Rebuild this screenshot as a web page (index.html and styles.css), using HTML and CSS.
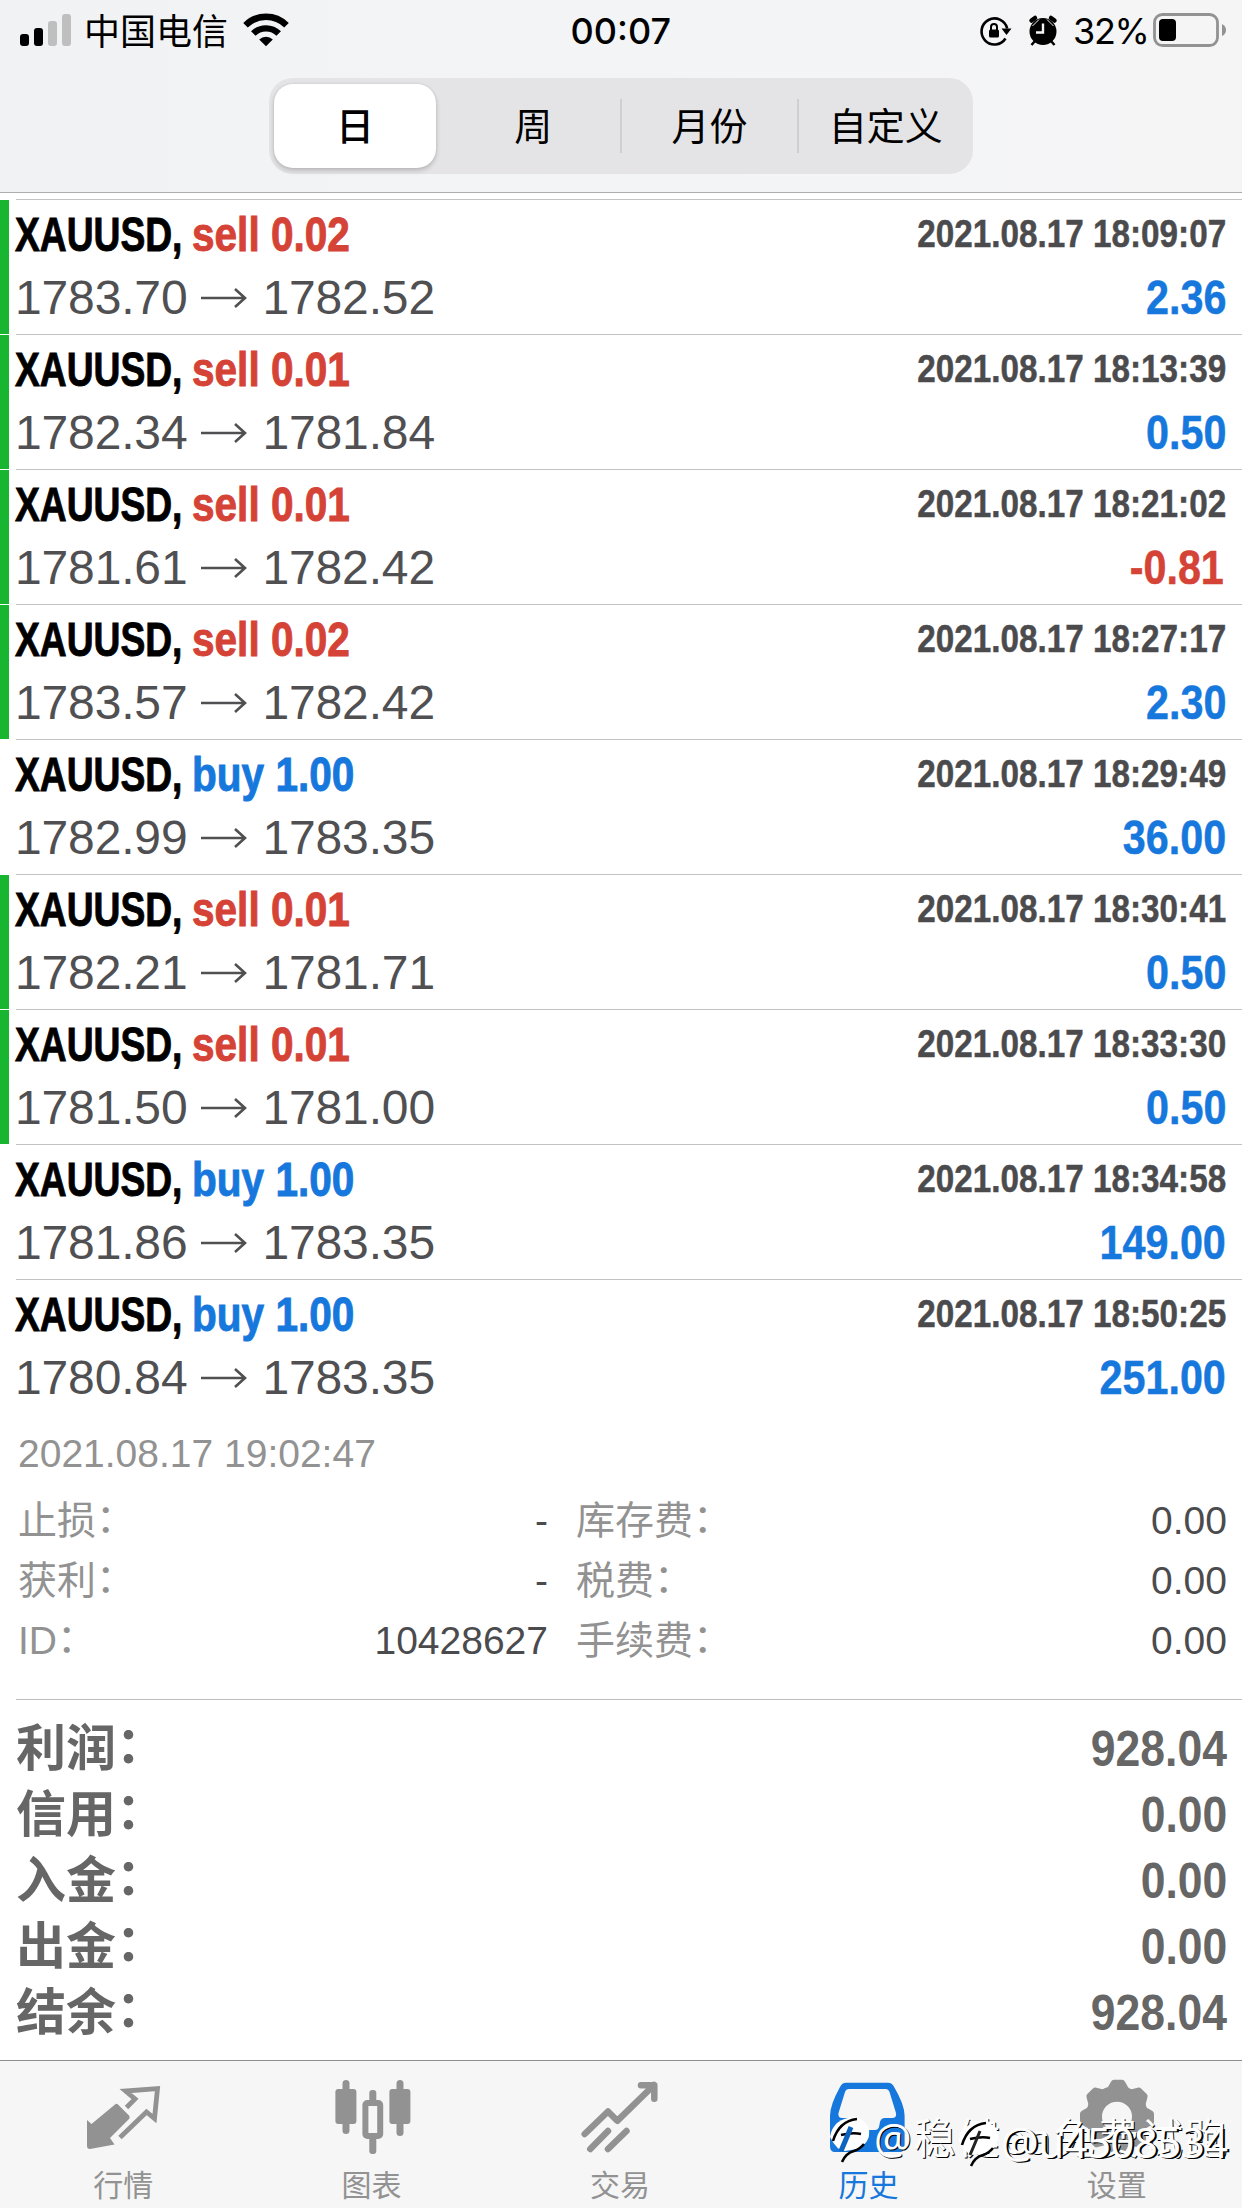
FILE: index.html
```html
<!DOCTYPE html>
<html lang="zh-CN">
<head>
<meta charset="utf-8">
<title>历史</title>
<link rel="stylesheet" href="styles.css">
</head>
<body>
<header class="header">
  <div class="status">
    <div class="status-left">
      <svg class="signal" width="52" height="34" viewBox="0 0 52 34"><rect x="0" y="21" width="9" height="12" rx="3"/><rect x="14" y="15" width="9" height="18" rx="3"/><g fill="#bfbfbf"><rect x="28" y="8" width="9" height="25" rx="3"/><rect x="42" y="1" width="9" height="32" rx="3"/></g></svg>
      <span class="carrier">中国电信</span>
      <svg class="wifi" width="46" height="34" viewBox="0 0 46 34"><g fill="none" stroke="#000" stroke-width="6.4"><path d="M2.5 12.3a29 29 0 0 1 41 0"/><path d="M10.3 20.6a18 18 0 0 1 25.400 0"/></g><path d="M16.200 26.400a9.800 9.800 0 0 1 13.600 0L23 33.200z"/></svg>
    </div>
    <time class="clock">00:07</time>
    <div class="status-right">
      <svg class="lock" width="34" height="34" viewBox="0 0 34 34"><path d="M26.500 24.500a13 13 0 1 1 1.700-10" fill="none" stroke="#000" stroke-width="2.600"/><path d="M22.500 14.500h10l-5 6.500z"/><rect x="10" y="15.500" width="10" height="8" rx="1.500"/><path d="M12 16v-3a3 3 0 0 1 6 0v3" fill="none" stroke="#000" stroke-width="2"/></svg>
      <svg class="alarm" width="30" height="34" viewBox="0 0 30 34"><circle cx="15" cy="17.500" r="13.500"/><path d="M3.500 6.500L7 4M26.500 6.500L23 4" stroke="#000" stroke-width="4.500" stroke-linecap="round"/><path d="M4.500 12L11 5.500M25.500 12L19 5.500" stroke="#f5f5f5" stroke-width="1"/><path d="M7 27l-3.500 4M23 27l3.500 4" stroke="#000" stroke-width="2.500"/><path d="M15 9.500v9H8" fill="none" stroke="#f5f5f5" stroke-width="2.400"/></svg>
      <span class="percent">32%</span>
      <svg class="battery" width="74" height="36" viewBox="0 0 74 36"><rect x="1.500" y="2.500" width="63" height="31" rx="8" fill="none" stroke="#929292" stroke-width="2.800"/><rect x="6" y="7" width="17" height="22" rx="4"/><path d="M69 12q4 2 4 6t-4 6z" fill="#929292"/></svg>
    </div>
  </div>
  <nav class="segments">
    <span class="segment selected">日</span>
    <span class="segment">周</span>
    <span class="segment divided">月份</span>
    <span class="segment divided">自定义</span>
  </nav>
</header>

<main class="content">
  <ul class="deals">
    <li class="deal marked"><div class="deal-body"><div class="line"><span class="title"><b class="symbol">XAUUSD,</b><b class="sell">sell 0.02</b></span><time class="date">2021.08.17 18:09:07</time></div><div class="line"><span class="price">1783.70<svg class="arrow" viewBox="0 0 46 22"><path d="M0 11h44M34 2l10 9-10 9"/></svg>1782.52</span><b class="profit">2.36</b></div></div></li>
    <li class="deal marked"><div class="deal-body"><div class="line"><span class="title"><b class="symbol">XAUUSD,</b><b class="sell">sell 0.01</b></span><time class="date">2021.08.17 18:13:39</time></div><div class="line"><span class="price">1782.34<svg class="arrow" viewBox="0 0 46 22"><path d="M0 11h44M34 2l10 9-10 9"/></svg>1781.84</span><b class="profit">0.50</b></div></div></li>
    <li class="deal marked"><div class="deal-body"><div class="line"><span class="title"><b class="symbol">XAUUSD,</b><b class="sell">sell 0.01</b></span><time class="date">2021.08.17 18:21:02</time></div><div class="line"><span class="price">1781.61<svg class="arrow" viewBox="0 0 46 22"><path d="M0 11h44M34 2l10 9-10 9"/></svg>1782.42</span><b class="profit loss">-0.81</b></div></div></li>
    <li class="deal marked"><div class="deal-body"><div class="line"><span class="title"><b class="symbol">XAUUSD,</b><b class="sell">sell 0.02</b></span><time class="date">2021.08.17 18:27:17</time></div><div class="line"><span class="price">1783.57<svg class="arrow" viewBox="0 0 46 22"><path d="M0 11h44M34 2l10 9-10 9"/></svg>1782.42</span><b class="profit">2.30</b></div></div></li>
    <li class="deal"><div class="deal-body"><div class="line"><span class="title"><b class="symbol">XAUUSD,</b><b class="buy">buy 1.00</b></span><time class="date">2021.08.17 18:29:49</time></div><div class="line"><span class="price">1782.99<svg class="arrow" viewBox="0 0 46 22"><path d="M0 11h44M34 2l10 9-10 9"/></svg>1783.35</span><b class="profit">36.00</b></div></div></li>
    <li class="deal marked"><div class="deal-body"><div class="line"><span class="title"><b class="symbol">XAUUSD,</b><b class="sell">sell 0.01</b></span><time class="date">2021.08.17 18:30:41</time></div><div class="line"><span class="price">1782.21<svg class="arrow" viewBox="0 0 46 22"><path d="M0 11h44M34 2l10 9-10 9"/></svg>1781.71</span><b class="profit">0.50</b></div></div></li>
    <li class="deal marked"><div class="deal-body"><div class="line"><span class="title"><b class="symbol">XAUUSD,</b><b class="sell">sell 0.01</b></span><time class="date">2021.08.17 18:33:30</time></div><div class="line"><span class="price">1781.50<svg class="arrow" viewBox="0 0 46 22"><path d="M0 11h44M34 2l10 9-10 9"/></svg>1781.00</span><b class="profit">0.50</b></div></div></li>
    <li class="deal"><div class="deal-body"><div class="line"><span class="title"><b class="symbol">XAUUSD,</b><b class="buy">buy 1.00</b></span><time class="date">2021.08.17 18:34:58</time></div><div class="line"><span class="price">1781.86<svg class="arrow" viewBox="0 0 46 22"><path d="M0 11h44M34 2l10 9-10 9"/></svg>1783.35</span><b class="profit">149.00</b></div></div></li>
    <li class="deal"><div class="deal-body"><div class="line"><span class="title"><b class="symbol">XAUUSD,</b><b class="buy">buy 1.00</b></span><time class="date">2021.08.17 18:50:25</time></div><div class="line"><span class="price">1780.84<svg class="arrow" viewBox="0 0 46 22"><path d="M0 11h44M34 2l10 9-10 9"/></svg>1783.35</span><b class="profit">251.00</b></div></div></li>
  </ul>

  <section class="details">
    <time class="closed">2021.08.17 19:02:47</time>
    <dl class="fields">
      <div class="field"><dt>止损<i>：</i></dt><dd>-</dd></div>
      <div class="field"><dt>库存费<i>：</i></dt><dd>0.00</dd></div>
      <div class="field"><dt>获利<i>：</i></dt><dd>-</dd></div>
      <div class="field"><dt>税费<i>：</i></dt><dd>0.00</dd></div>
      <div class="field"><dt>ID<i>：</i></dt><dd>10428627</dd></div>
      <div class="field"><dt>手续费<i>：</i></dt><dd>0.00</dd></div>
    </dl>
  </section>

  <dl class="summary">
    <div class="total"><dt>利润<i>：</i></dt><dd>928.04</dd></div>
    <div class="total"><dt>信用<i>：</i></dt><dd>0.00</dd></div>
    <div class="total"><dt>入金<i>：</i></dt><dd>0.00</dd></div>
    <div class="total"><dt>出金<i>：</i></dt><dd>0.00</dd></div>
    <div class="total"><dt>结余<i>：</i></dt><dd>928.04</dd></div>
  </dl>
</main>

<footer class="tabs">
  <a class="tab"><svg class="icon" viewBox="0 0 80 80"><path d="M3 45l4.500 4L31 29.500q1.500-1.500 3 0l11 11q1.500 2 0 3.500L26 63l4.500 6.500L6 74q-3 0-3-3z"/><path d="M42.500 32.500l8.500-8.500-9.500-8 32-2.500-3 30-8-6.500-26.500 25.500" fill="none" stroke="currentColor" stroke-width="4.800"/></svg><span>行情</span></a>
  <a class="tab"><svg class="icon" viewBox="0 0 80 80"><rect x="2.400" y="14" width="21" height="35" rx="3"/><rect x="9.500" y="5" width="7" height="54" rx="3.500"/><rect x="56.400" y="14" width="21" height="35" rx="3"/><rect x="63.500" y="5" width="7" height="56" rx="3.500"/><rect x="36.300" y="15" width="7" height="14" rx="3"/><rect x="36.300" y="60" width="7" height="19" rx="3"/><rect x="32.400" y="28" width="14.800" height="33" rx="2" fill="none" stroke="currentColor" stroke-width="6"/></svg><span>图表</span></a>
  <a class="tab"><svg class="icon" viewBox="0 0 80 80"><g fill="none" stroke="currentColor" stroke-width="6.500" stroke-linecap="round"><path d="M3.700 59L27 36.500l9.300 9.300L73 10M60 10.300h13.300v13.500" stroke-linejoin="round"/><path d="M9.300 74L27 56M27 74l18.500-18"/></g></svg><span>交易</span></a>
  <a class="tab active"><svg class="icon" viewBox="0 0 80 80"><path fill-rule="evenodd" d="M17 7.700h42q4 0 6 4 10.600 18 10.600 29V71q0 6-5 6H6q-5 0-5-6V41q0-11 10-29 2-4.300 6-4.300zM20 14q-3 0-4 3L9.500 38q-1 5 4 5H21q4 0 5 4l1 5q1 3 4 3h15q3 0 4-3l1-5q1-4 5-4h7q5 0 4-5L60.500 17q-1-3-4-3z"/></svg><span>历史</span></a>
  <a class="tab"><svg class="icon" viewBox="0 0 80 80"><g transform="translate(39 41.700)"><circle r="23" fill="none" stroke="currentColor" stroke-width="16"/><path d="M-10-28l4-7q1-2 3-2h8q2 0 3 2l4 7zM-10 28l4 7q1 2 3 2h8q2 0 3-2l4-7z"/><path d="M-10-28l4-7q1-2 3-2h8q2 0 3 2l4 7zM-10 28l4 7q1 2 3 2h8q2 0 3-2l4-7z" transform="rotate(45)"/><path d="M-10-28l4-7q1-2 3-2h8q2 0 3 2l4 7zM-10 28l4 7q1 2 3 2h8q2 0 3-2l4-7z" transform="rotate(90)"/><path d="M-10-28l4-7q1-2 3-2h8q2 0 3 2l4 7zM-10 28l4 7q1 2 3 2h8q2 0 3-2l4-7z" transform="rotate(135)"/></g></svg><span>设置</span></a>
  <div class="watermark first"><svg class="brand" viewBox="0 0 42 52"><path d="M1 24Q4 5 26 4q10 2 14 12 2 14-12 20l-12 2q-8 0-15-14z" fill="#fff"/><path d="M4 28Q10 8 28 6M12 22q12-3 20-1M13 49q4-9 12-11 6-2 10-7" fill="none" stroke="#000" stroke-width="2.600"/><path d="M12 38q6-14 10-24" fill="none" stroke="#0d63c0" stroke-width="5"/></svg><span>@稳健ea免费试跑</span></div>
  <div class="watermark second"><svg class="brand" viewBox="0 0 42 52"><path d="M1 24Q4 5 26 4q10 2 14 12 2 14-12 20l-12 2q-8 0-15-14z" fill="#fff"/><path d="M4 28Q10 8 28 6M12 22q12-3 20-1M13 49q4-9 12-11 6-2 10-7" fill="none" stroke="#000" stroke-width="2.600"/><path d="M12 38q6-14 10-24" fill="none" stroke="#222" stroke-width="3"/></svg><span>@u4508534</span></div>
</footer>
</body>
</html>
```
FILE: styles.css
```css
* { box-sizing: border-box; }
body, ul, dl, dd { margin: 0; padding: 0; }
body {
  width: 1242px;
  height: 2208px;
  overflow: hidden;
  display: flex;
  flex-direction: column;
  background: #fff;
  font-family: "Liberation Sans", "Noto Sans CJK SC", sans-serif;
}

/* Header */
.header {
  height: 193px;
  background: linear-gradient(90deg, #f1f2f3, #f3f4f6 40%, #f5f5f6);
  border-bottom: 1px solid #adadad;
  display: flex;
  flex-direction: column;
  align-items: center;
}
.status {
  width: 100%;
  height: 78px;
  display: grid;
  grid-template-columns: 1fr auto 1fr;
  padding: 0 15px 0 20px;
  line-height: 62px;
  font-size: 36px;
}
.status-left, .status-right { display: flex; height: 62px; align-items: center; }
.status-right { justify-content: flex-end; }
.signal { margin-right: 12px; margin-top: -2px; }
.carrier { width: 144px; margin-right: 15px; padding-top: 3px; }
.wifi { margin-top: -2px; }
.clock { font-family: Inter, sans-serif; font-weight: 500; width: 106px; }
.lock { margin-right: 15px; }
.alarm { margin-right: 15px; margin-top: -1px; }
.percent { font-family: Inter, sans-serif; width: 75px; letter-spacing: -1.3px; margin-right: 5px; }
.battery { margin-top: -2px; }

.segments {
  width: 704px;
  height: 96px;
  display: flex;
  align-items: center;
  border-radius: 24px;
  background: #e4e4e6;
  font-size: 38px;
}
.segment { flex: 1; text-align: center; height: 54px; line-height: 56px; }
.divided { border-left: 2px solid #cfcfd1; }
.selected {
  flex: 0 0 162px;
  margin: 0 10px 0 5px;
  height: 84px;
  line-height: 86px;
  border-radius: 19px;
  background: #fff;
  font-weight: 500;
  box-shadow: 0 3px 5px rgba(0, 0, 0, .16), 0 0 3px rgba(0, 0, 0, .12);
}

/* Deals */
.content { flex: 1; padding-top: 6px; }
.deals { list-style: none; }
.deal { height: 135px; display: flex; padding-left: 16px; }
.marked { padding-left: 0; }
.marked::before { content: ""; width: 9px; margin: 1px 7px 0 0; background: #17b530; }
.deal-body { flex: 1; border-top: 1px solid #c3c3c3; padding: 3px 16px 0 0; }
.line { height: 63px; line-height: 63px; display: flex; justify-content: space-between; font-size: 48px; }
.title { display: flex; margin-left: -1px; }
.symbol, .sell, .buy { transform-origin: left; white-space: nowrap; -webkit-text-stroke: .9px currentColor; }
.symbol { width: 177px; transform: scaleX(.775); }
.sell, .buy { transform: scaleX(.845); }
.sell { color: #d54236; }
.buy, .profit { color: #1677dc; }
.date { font-size: 39px; font-weight: 700; color: #4b4b4e; line-height: 61px; transform: scaleX(.853); transform-origin: right; white-space: nowrap; -webkit-text-stroke: .5px currentColor; }
.price { color: #505053; display: flex; align-items: center; margin-left: -1px; letter-spacing: -.15px; }
.arrow { width: 46px; height: 22px; margin: 0 15px 0 14px; fill: none; stroke: #505053; stroke-width: 2.6; }
.profit { transform: scaleX(.86); transform-origin: right; -webkit-text-stroke: .5px currentColor; }
.loss { color: #d54236; padding-right: 3px; }

/* Expanded deal details */
.details { height: 285px; padding: 16px 15px 0 18px; font-size: 39px; color: #929292; }
.closed { display: block; line-height: 48px; margin-bottom: 13px; }
.fields { display: grid; grid-template-columns: 530px 1fr; column-gap: 28px; }
.field { display: flex; justify-content: space-between; line-height: 60px; height: 60px; }
.field dt { font-weight: 400; }
.field dd { color: #4b4b4e; }
dt i { font-style: normal; line-height: 0; vertical-align: .06em; }

/* Totals */
.summary { margin-left: 16px; border-top: 1px solid #bdbdbd; padding: 16px 15px 0 0; }
.total { display: flex; justify-content: space-between; height: 66px; line-height: 66px; font-size: 50px; color: #666; }
.total dt { font-weight: 700; }
.total dd { font-weight: 700; transform: scaleX(.89); transform-origin: right; }

/* Tab bar */
.tabs {
  position: relative;
  height: 148px;
  display: flex;
  background: #f6f6f6;
  border-top: 1px solid #8f8f8f;
}
.tab {
  flex: 1;
  display: flex;
  flex-direction: column;
  align-items: center;
  padding-top: 14px;
  color: #929292;
  fill: currentColor;
  font-size: 30px;
  line-height: 36px;
}
.tab span { margin: 13px 2px 0 0; }
.icon { width: 80px; height: 80px; }
.active { color: #1677dc; }

/* Author marks laid over the tab bar */
.watermark {
  position: absolute;
  top: 52px;
  display: flex;
  align-items: flex-start;
  white-space: nowrap;
  color: #fff;
  font-family: "Noto Sans", "Noto Sans CJK SC", sans-serif;
  font-size: 42px;
  line-height: 50px;
  text-shadow: 1px 1px 0 #000;
}
.brand { width: 42px; height: 52px; }
.first { left: 829px; }
.first span { margin-left: 3px; letter-spacing: 2px; }
.second { left: 958px; top: 56px; }
.second span { margin-left: 1px; letter-spacing: -.6px; text-shadow: 2px 1px 0 #000; }
```
